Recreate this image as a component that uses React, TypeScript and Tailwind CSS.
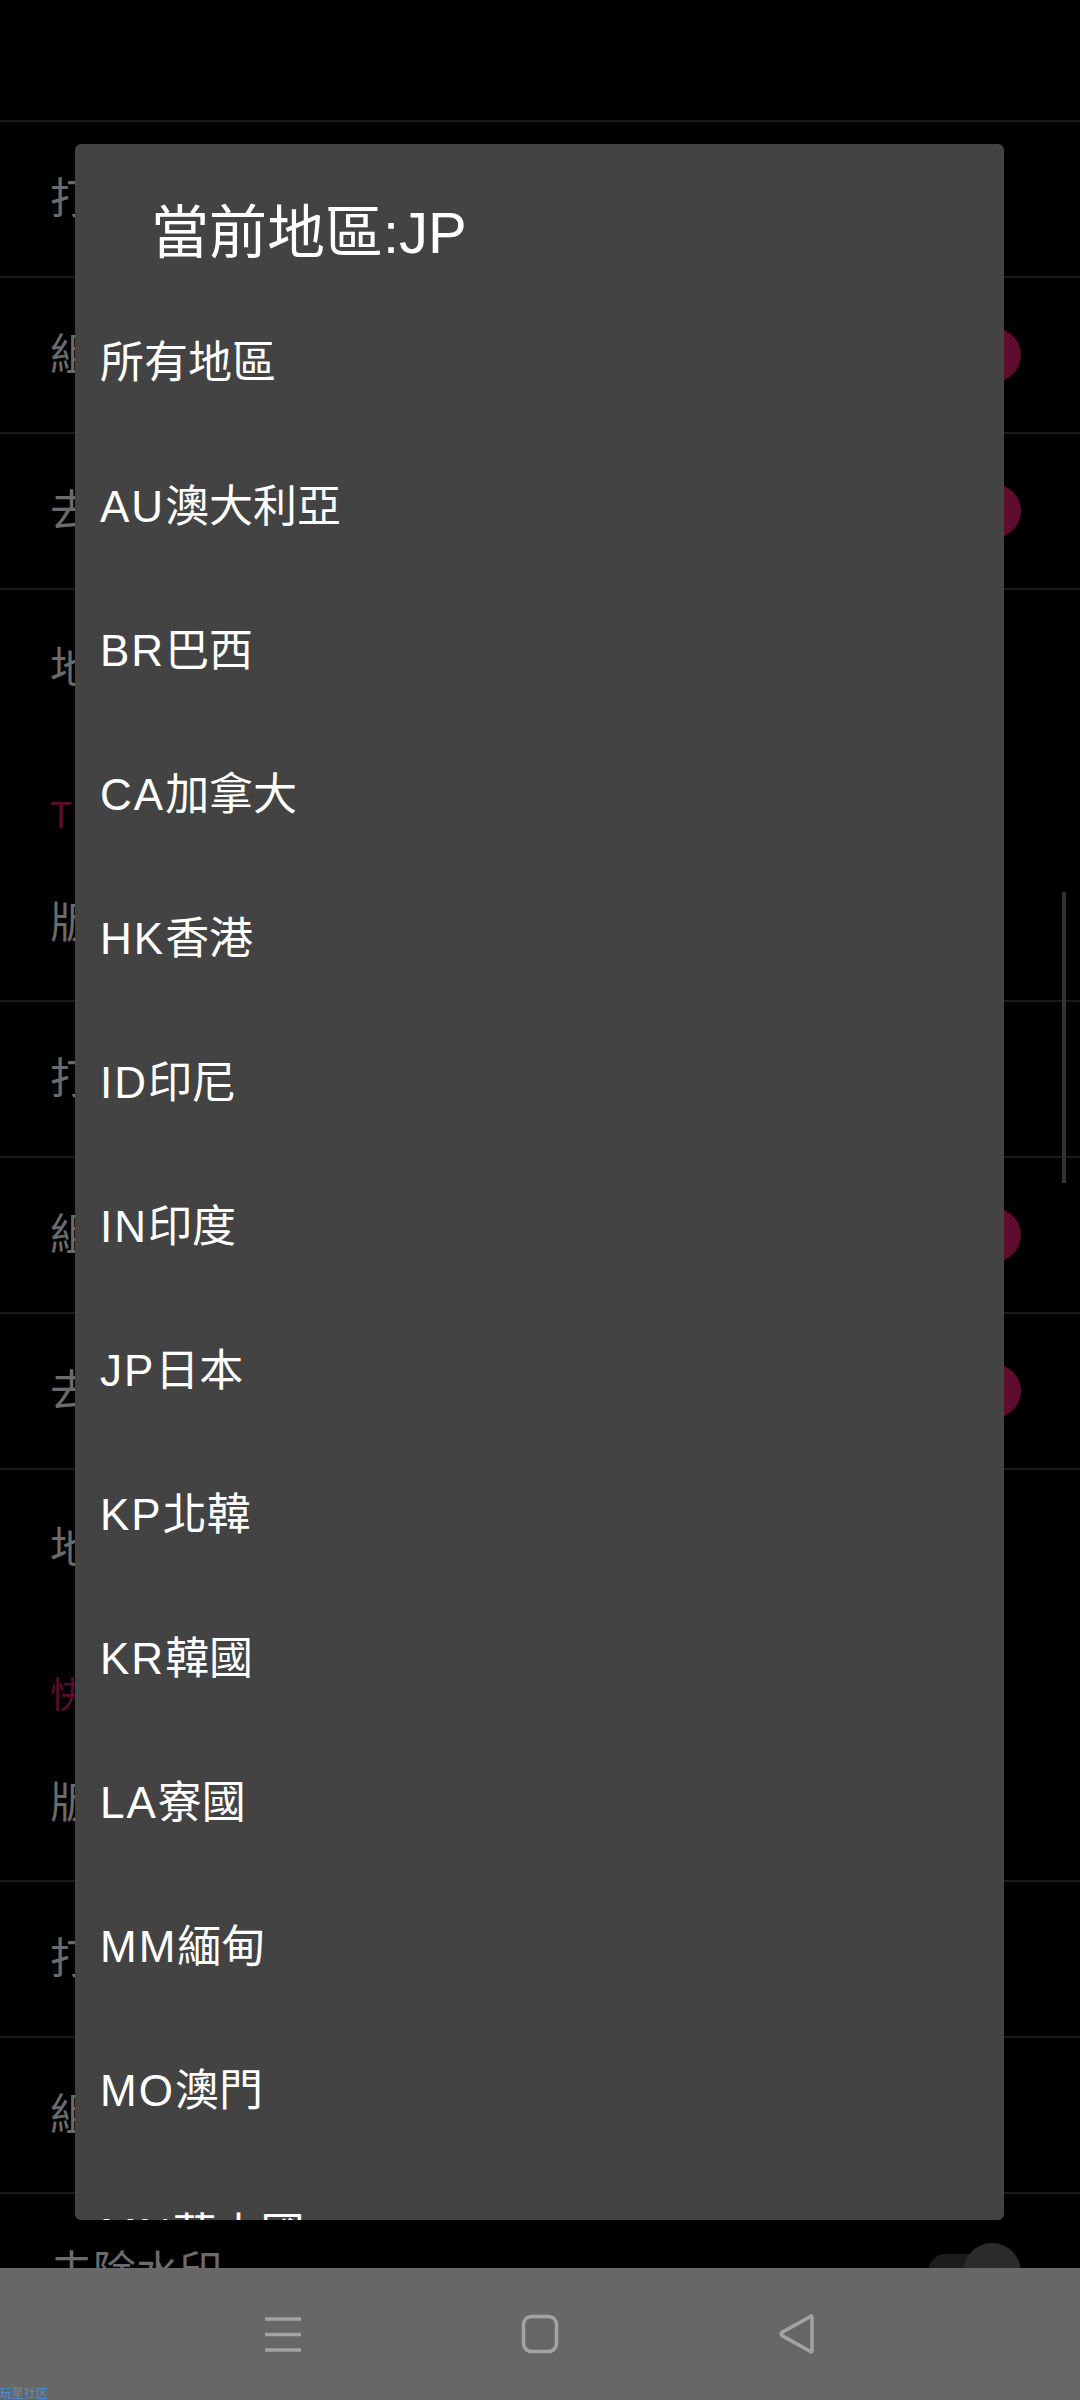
import React from "react";

type Row = { label: string; toggle?: "on" | "off" };

function Toggle({ state }: { state: "on" | "off" }) {
  const on = state === "on";
  return (
    <div className="relative w-[93px] h-[58px] shrink-0">
      <div
        className={
          on
            ? "absolute left-0 right-[10px] top-[11px] h-[36px] rounded-full bg-[#3a0a1c]"
            : "absolute left-0 right-[10px] top-[11px] h-[36px] rounded-full bg-[#1c1c1c]"
        }
      />
      <div
        className={
          on
            ? "absolute right-0 top-[2px] w-[54px] h-[54px] rounded-full bg-[#5e0b2c]"
            : "absolute right-0 top-0 w-[58px] h-[58px] rounded-full bg-[#2b2b2b]"
        }
      />
    </div>
  );
}

function SettingRow({ row, last }: { row: Row; last?: boolean }) {
  return (
    <div
      className={
        last
          ? "h-[156px] flex items-center justify-between pl-[50px] pr-[59px]"
          : "h-[156px] flex items-center justify-between pl-[50px] pr-[59px] border-b-2 border-[#1b1b1b]"
      }
    >
      <span className="text-[43px] leading-none text-[#6b6b6b]">{row.label}</span>
      {row.toggle ? <Toggle state={row.toggle} /> : null}
    </div>
  );
}

function Header({ label }: { label: string }) {
  return (
    <div className="h-[100px] flex items-end pl-[50px] pb-[12px]">
      <span className="text-[36px] leading-none tracking-[3px] text-[#5c0d2d]">{label}</span>
    </div>
  );
}

const group1: Row[] = [
  { label: "打開應用" },
  { label: "組件啟用", toggle: "on" },
  { label: "去除廣告", toggle: "on" },
  { label: "地區設置" },
];

const group2: Row[] = [
  { label: "版本" },
  { label: "打開應用" },
  { label: "組件啟用", toggle: "on" },
  { label: "去除廣告", toggle: "on" },
  { label: "地區設置" },
];

const group3: Row[] = [
  { label: "版本" },
  { label: "打開應用" },
  { label: "組件啟用" },
  { label: "去除水印", toggle: "off" },
];

const regions: [string, string][] = [
  ["", "所有地區"],
  ["AU", "澳大利亞"],
  ["BR", "巴西"],
  ["CA", "加拿大"],
  ["HK", "香港"],
  ["ID", "印尼"],
  ["IN", "印度"],
  ["JP", "日本"],
  ["KP", "北韓"],
  ["KR", "韓國"],
  ["LA", "寮國"],
  ["MM", "緬甸"],
  ["MO", "澳門"],
  ["MN", "蒙古國"],
  ["MY", "馬來西亞"],
];

export default function App() {
  return (
    <div className="relative w-[1080px] h-[2400px] overflow-hidden bg-black font-['Liberation_Sans','Noto_Sans_CJK_TC',sans-serif]">
      {/* background settings page */}
      <div className="flex flex-col">
        <div className="h-[122px] border-b-2 border-[#1b1b1b]" />
        {group1.map((r, i) => (
          <SettingRow key={"a" + i} row={r} last={i === group1.length - 1} />
        ))}
        <Header label="TikTok" />
        {group2.map((r, i) => (
          <SettingRow key={"b" + i} row={r} last={i === group2.length - 1} />
        ))}
        <Header label="快手" />
        {group3.map((r, i) => (
          <SettingRow key={"c" + i} row={r} last={i === group3.length - 1} />
        ))}
      </div>

      {/* background scrollbar */}
      <div className="absolute right-[14px] top-[892px] w-[4px] h-[291px] bg-[#333333]" />

      {/* dialog */}
      <div className="absolute left-[75px] top-[144px] w-[929px] h-[2076px] rounded-[6px] bg-[#434343] overflow-hidden flex flex-col">
        <div className="h-[147px] shrink-0 pt-[60px] pl-[76px]">
          <span className="block text-[58px] leading-[58px] text-white">當前地區:JP</span>
        </div>
        {regions.map(([code, name]) => (
          <div key={code + name} className="h-[144px] shrink-0 flex items-center pl-[25px]">
            <span className="text-[44px] leading-none text-white">
              <span className="tracking-[2px]">{code}</span>
              {name}
            </span>
          </div>
        ))}
      </div>

      {/* navigation bar */}
      <div className="absolute left-0 bottom-0 w-[1080px] h-[132px] bg-[#676767] flex items-center justify-center">
        <div className="w-[257px] flex justify-center">
          <svg width="40" height="40" viewBox="0 0 40 40" fill="none">
            <path d="M2 5H38M2 20.5H38M2 36H38" stroke="#a3a3a3" strokeWidth="3.5" />
          </svg>
        </div>
        <div className="w-[257px] flex justify-center">
          <svg width="38" height="40" viewBox="0 0 38 40" fill="none">
            <rect x="2.5" y="2.5" width="33" height="35" rx="8" stroke="#a3a3a3" strokeWidth="3.5" />
          </svg>
        </div>
        <div className="w-[257px] flex justify-center">
          <svg width="40" height="42" viewBox="0 0 40 42" fill="none">
            <path
              d="M35 4.5 L35 37.5 Q35 40 33 38.3 L5 22.6 Q3 21 5 19.4 L33 3.7 Q35 2 35 4.5 Z"
              stroke="#a3a3a3"
              strokeWidth="3.5"
              strokeLinejoin="round"
            />
          </svg>
        </div>
        <span className="absolute left-0 bottom-[1px] text-[12px] leading-none text-[#4a8fd6] font-['Noto_Sans_CJK_SC',sans-serif]">
          玩星社区
        </span>
      </div>
    </div>
  );
}
